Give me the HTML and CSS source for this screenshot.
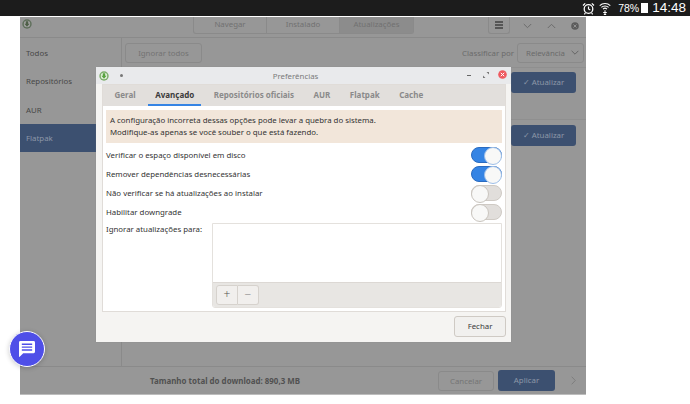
FILE: index.html
```html
<!DOCTYPE html>
<html lang="pt">
<head>
<meta charset="utf-8">
<title>Preferências</title>
<link rel="stylesheet" href="styles.css">
</head>
<body>
<div class="statusbar">
  <svg class="st-alarm" width="13" height="13" viewBox="0 0 13 13" fill="none" stroke="#fff"><circle cx="6.5" cy="7" r="4.3" stroke-width="1.3"/><path d="M6.5 4.5V7l1.8 1M1 3.5 3.2 1.3M12 3.5 9.8 1.3M3.3 11 2.4 12.3M9.7 11l.9 1.3" stroke-width="1.2"/></svg>
  <svg class="st-wifi" width="12" height="13" viewBox="0 0 12 13" fill="none" stroke="#fff"><path d="M.7 3.6C3.6.8 8.4.8 11.3 3.6M2.4 5.4c2-1.9 5.2-1.9 7.2 0M4 7.1c1.1-1 2.9-1 4 0" stroke-width="1.1"/><path d="M6 8.2v4.3M4.2 10.5h3.6M4.8 12.5h2.4" stroke-width="1"/></svg>
  <span class="st-batt">78%</span>
  <span class="st-battery"></span>
  <span class="st-time">14:48</span>
</div>

<div class="app">
  <header class="app-head">
    <svg class="app-icon" width="10" height="10" viewBox="0 0 10 10"><circle cx="5" cy="5" r="4.7" fill="#5f6f5b"/><circle cx="5" cy="5" r="3.2" fill="#a3a3a3"/><path d="M3.8 2.2h2.4v2.6h1.4L5 7.8 2.4 4.8h1.4z" fill="#4e5f47"/></svg>
    <div class="view-tabs">
      <span class="view-tab">Navegar</span>
      <span class="view-tab">Instalado</span>
      <span class="view-tab view-tab-on">Atualizações</span>
    </div>
    <div class="head-right">
      <span class="menu-btn"><i></i><i></i><i></i></span>
      <svg class="wm wm-down" width="9" height="6" viewBox="0 0 9 6" fill="none" stroke="#6c6c6c"><path d="M.8 1 4.500 4.700 8.200 1"/></svg>
      <svg class="wm wm-up" width="9" height="6" viewBox="0 0 9 6" fill="none" stroke="#6c6c6c"><path d="M.8 5 4.500 1.300 8.200 5"/></svg>
      <svg class="wm wm-close" width="8" height="8" viewBox="0 0 8 8"><circle cx="4" cy="4" r="3.800" fill="#5c5c5c"/><path d="M2.500 2.500l3 3M5.500 2.500l-3 3" stroke="#999" stroke-width=".9"/></svg>
    </div>
  </header>

  <div class="app-body">
    <nav class="side">
      <div class="side-item">Todos</div>
      <div class="side-item">Repositórios</div>
      <div class="side-item">AUR</div>
      <div class="side-item side-on">Flatpak</div>
    </nav>
    <main class="content">
      <div class="toolbar">
        <span class="btn-ghost btn-ignore">Ignorar todos</span>
        <span class="sort-label">Classificar por</span>
        <span class="select">Relevância
          <svg width="8" height="5" viewBox="0 0 8 5" fill="none" stroke="#666"><path d="M.6.8 4 4.200 7.400.8"/></svg>
        </span>
      </div>
      <div class="update-row"><span class="btn-update">✓ Atualizar</span></div>
      <div class="update-row update-row-2"><span class="btn-update">✓ Atualizar</span></div>
    </main>
  </div>

  <footer class="app-foot">
    <span class="total">Tamanho total do download: 890,3 MB</span>
    <span class="btn-ghost btn-cancel">Cancelar</span>
    <span class="btn-apply">Aplicar</span>
    <svg class="foot-next" width="5" height="9" viewBox="0 0 5 9" fill="none" stroke="#7e7e7e"><path d="M.7.7 4.300 4.500.7 8.300"/></svg>
  </footer>
</div>

<section class="dialog">
  <div class="dlg-title">
    <svg class="dlg-icon" width="10" height="10" viewBox="0 0 10 10"><circle cx="5" cy="5" r="4.700" fill="#7dae6b"/><circle cx="5" cy="5" r="3.200" fill="#e4f0de"/><path d="M3.800 2.200h2.400v2.600h1.400L5 7.800 2.400 4.800h1.400z" fill="#57a23f"/></svg>
    <span class="dlg-dot"></span>
    <span class="dlg-name">Preferências</span>
    <span class="dlg-min"></span>
    <svg class="dlg-max" width="6" height="6" viewBox="0 0 6 6" fill="#777"><path d="M3.500 0H6v2.500zM0 3.500V6h2.500z"/></svg>
    <svg class="dlg-close" width="9" height="9" viewBox="0 0 9 9"><circle cx="4.500" cy="4.500" r="4.300" fill="#ef5a60"/><path d="M2.800 2.800l3.400 3.400M6.200 2.800 2.800 6.200" stroke="#fff" stroke-width="1"/></svg>
  </div>
  <div class="notebook">
    <div class="tabs">
      <span class="tab">Geral</span>
      <span class="tab tab-on">Avançado</span>
      <span class="tab">Repositórios oficiais</span>
      <span class="tab">AUR</span>
      <span class="tab">Flatpak</span>
      <span class="tab">Cache</span>
    </div>
    <div class="page">
      <div class="notice">A configuração incorreta dessas opções pode levar a quebra do sistema.<br>Modifique-as apenas se você souber o que está fazendo.</div>
      <div class="opt"><span>Verificar o espaço disponível em disco</span><span class="sw sw-on"></span></div>
      <div class="opt"><span>Remover dependências desnecessárias</span><span class="sw sw-on"></span></div>
      <div class="opt"><span>Não verificar se há atualizações ao instalar</span><span class="sw"></span></div>
      <div class="opt"><span>Habilitar downgrade</span><span class="sw"></span></div>
      <div class="ignore">
        <span class="ignore-label">Ignorar atualizações para:</span>
        <div class="listbox">
          <div class="list-area"></div>
          <div class="list-tools">
            <span class="tool">+</span><span class="tool tool-minus">−</span>
          </div>
        </div>
      </div>
    </div>
  </div>
  <div class="dlg-foot"><span class="btn-close">Fechar</span></div>
</section>

<div class="fab">
  <svg width="16" height="16" viewBox="0 0 17 17"><path d="M1.500 0h14A1.500 1.500 0 0 1 17 1.500v10a1.500 1.500 0 0 1-1.500 1.500H4.500L1 16.500a.5.500 0 0 1-1-.300V1.500A1.500 1.500 0 0 1 1.500 0z" fill="#fff"/><path d="M3 3.500h11M3 6.500h11M3 9.500h11" stroke="#4f4fe8" stroke-width="1.500"/></svg>
</div>
</body>
</html>
```

FILE: styles.css
```css
* { box-sizing: border-box; }
html, body { margin: 0; height: 100%; }
body {
  width: 690px;
  height: 404px;
  overflow: hidden;
  background: #fff;
  position: relative;
  font-family: "Noto Sans", sans-serif;
  font-size: 7.85px;
  color: #3a3a3a;
}

/* status bar */
.statusbar {
  height: 16px;
  background: #1c1c1c;
  display: flex;
  align-items: center;
  justify-content: flex-end;
  color: #fff;
  padding-right: 4px;
}
.st-alarm { margin-right: 4px; }
.st-wifi { margin-right: 7px; }
.st-batt { font: 10.5px "Liberation Sans", sans-serif; }
.st-battery { width: 7px; height: 10px; background: #fff; margin: 0 4px 0 2px; }
.st-time { font: 13.5px/16px "Liberation Sans", sans-serif; }

/* application behind the dialog */
.app {
  margin: 1px 0 0 20px;
  width: 566px;
  height: 378px;
  background: #979797;
  color: #4f4f4f;
  display: flex;
  flex-direction: column;
  border-bottom: 1px solid #bdbdbd;
}
.app-head {
  height: 21px;
  flex: none;
  display: flex;
  align-items: flex-start;
  padding-left: 2px;
  border-bottom: 1px solid #8a8a8a;
}
.app-icon { margin-top: 2px; }
.view-tabs {
  display: flex;
  margin-left: 161px;
  height: 17px;
  border: 1px solid #8a8a8a;
  border-top: 0;
  border-radius: 0 0 3px 3px;
}
.view-tab {
  width: 73px;
  text-align: center;
  line-height: 15px;
  color: #717171;
  border-right: 1px solid #8a8a8a;
}
.view-tab:last-child { border-right: 0; }
.view-tab-on { background: #8c8c8c; }
.head-right { display: flex; align-items: center; height: 17px; margin-left: 74px; }
.menu-btn {
  width: 22px;
  height: 17px;
  border: 1px solid #8a8a8a;
  border-top: 0;
  border-radius: 0 0 3px 3px;
  display: flex;
  flex-direction: column;
  align-items: center;
  justify-content: center;
  gap: 1.5px;
}
.menu-btn i { width: 8px; height: 1.5px; background: #565656; }
.wm-down { margin-left: 13px; }
.wm-up { margin-left: 15px; }
.wm-close { margin-left: 15px; }

.app-body { flex: 1; display: flex; min-height: 0; }
.side { width: 102px; flex: none; border-right: 1px solid #8a8a8a; padding-top: 1px; }
.side-item { height: 28.3px; line-height: 28.3px; padding-left: 6px; color: #474747; }
.side-on { background: #3c5070; color: #8d97a8; }
.content { flex: 1; min-width: 0; }
.toolbar {
  height: 30px;
  display: flex;
  align-items: center;
  padding: 0 2px 0 3px;
  border-bottom: 1px solid #8f8f8f;
}
.btn-ghost {
  display: inline-block;
  height: 20px;
  line-height: 18px;
  border: 1px solid #8a8a8a;
  border-radius: 3px;
  text-align: center;
  color: #737373;
}
.btn-ignore { width: 77px; }
.sort-label { margin-left: auto; color: #6b6b6b; }
.select {
  width: 67px;
  height: 20px;
  margin-left: 3px;
  border: 1px solid #8a8a8a;
  border-radius: 3px;
  display: flex;
  align-items: center;
  justify-content: space-between;
  padding: 0 4px 0 8px;
  color: #6b6b6b;
}
.update-row {
  height: 52px;
  padding: 4px 10px 0 0;
  display: flex;
  justify-content: flex-end;
  align-items: flex-start;
  border-bottom: 1px solid #8f8f8f;
}
.update-row-2 { border-bottom: 0; padding-top: 5px; }
.btn-update {
  width: 65px;
  height: 21px;
  line-height: 21px;
  background: #3c5070;
  border-radius: 3px;
  color: #8d97a8;
  text-align: center;
}
.app-foot {
  height: 28px;
  flex: none;
  display: flex;
  align-items: center;
  border-top: 1px solid #8a8a8a;
  padding-left: 130px;
}
.total { font-weight: 700; font-size: 7.95px; color: #515151; width: 288px; }
.btn-cancel { width: 56px; color: #757575; }
.btn-apply {
  width: 57px;
  height: 21px;
  line-height: 21px;
  margin-left: 4px;
  background: #3c5070;
  border-radius: 3px;
  color: #8d97a8;
  text-align: center;
}
.foot-next { margin-left: 16px; }

/* dialog */
.dialog {
  position: absolute;
  left: 96px;
  top: 67px;
  width: 415px;
  height: 275px;
  background: #f5f4f2;
  border-radius: 3px 3px 0 0;
  box-shadow: 0 0 1px #777;
  display: flex;
  flex-direction: column;
  padding: 0 5px 0 6px;
}
.dlg-title {
  height: 17px;
  margin: 0 -5px 0 -6px;
  padding-left: 3px;
  background: #e9eaec;
  display: flex;
  align-items: center;
  position: relative;
}
.dlg-dot { width: 3px; height: 3px; background: #777; border-radius: 50%; margin-left: 11px; }
.dlg-name { position: absolute; left: 0; right: 16px; text-align: center; color: #7a7a7a; }
.dlg-min { position: absolute; left: 371px; top: 8px; width: 4px; height: 1px; background: #666; }
.dlg-max { position: absolute; left: 387px; top: 5px; }
.dlg-close { position: absolute; left: 402px; top: 3px; }

.notebook {
  height: 228px;
  flex: none;
  display: flex;
  flex-direction: column;
  background: #fff;
  border: 1px solid #e0dcd8;
}
.tabs {
  height: 21px;
  flex: none;
  display: flex;
  gap: 5.5px;
  background: #e2dfdc;
  padding-left: 4.5px;
}
.tab {
  padding: 0 7px;
  line-height: 20px;
  font-size: 8px;
  font-weight: 700;
  color: #8a8a8a;
}
.tab-on { color: #3b3b3b; box-shadow: inset 0 -2px 0 #3584e4; }
.page { flex: 1; padding: 4px 3px 0; display: flex; flex-direction: column; color: #333; }
.notice {
  height: 33px;
  background: #f2e6da;
  padding: 5px 4px 0;
  line-height: 11.5px;
  margin-bottom: 2px;
}
.opt {
  height: 19.2px;
  display: flex;
  align-items: center;
  justify-content: space-between;
}
.sw {
  width: 31px;
  height: 16px;
  border-radius: 8px;
  background: #e1dedb;
  border: 1px solid #cfcac4;
  position: relative;
}
.sw::after {
  content: "";
  position: absolute;
  left: -1px;
  top: -1px;
  width: 16px;
  height: 16px;
  border-radius: 50%;
  background: #f8f8f7;
  border: 1px solid #c9c4be;
}
.sw-on { background: #3584e4; border-color: #2a6bc0; }
.sw-on::after { left: auto; right: -1px; border-color: #9ebfe8; }
.ignore { display: flex; margin-top: 1px; }
.ignore-label { width: 106px; flex: none; padding-top: 1px; white-space: nowrap; }
.listbox {
  flex: 1;
  height: 85px;
  display: flex;
  flex-direction: column;
  border: 1px solid #e4e1dd;
  border-radius: 0 0 3px 3px;
  overflow: hidden;
}
.list-area { flex: 1; background: #fff; }
.list-tools {
  height: 25px;
  flex: none;
  background: #e8e6e3;
  border-top: 1px solid #dcd8d4;
  padding: 2px 0 0 3px;
  display: flex;
}
.tool {
  width: 22px;
  height: 20px;
  line-height: 17px;
  background: #f1efed;
  border: 1px solid #d6d2cd;
  border-radius: 3px 0 0 3px;
  text-align: center;
  font-size: 12px;
  font-weight: 300;
  color: #555;
}
.tool-minus { width: 21px; border-left: 0; border-radius: 0 3px 3px 0; color: #8a8a8a; }
.dlg-foot { flex: 1; display: flex; justify-content: flex-end; align-items: center; padding-bottom: 1px; }
.btn-close {
  width: 52px;
  height: 21px;
  line-height: 19px;
  border: 1px solid #cfcac4;
  border-radius: 3px;
  background: #f1f0ee;
  text-align: center;
  color: #3a3a3a;
}

/* floating chat button */
.fab {
  position: absolute;
  left: 9px;
  top: 331px;
  width: 36px;
  height: 36px;
  border-radius: 50%;
  background: #4f4fe8;
  border: 1px solid #fff;
  box-shadow: 0 1px 5px rgba(0, 0, 0, .2);
  display: flex;
  align-items: center;
  justify-content: center;
}
```
